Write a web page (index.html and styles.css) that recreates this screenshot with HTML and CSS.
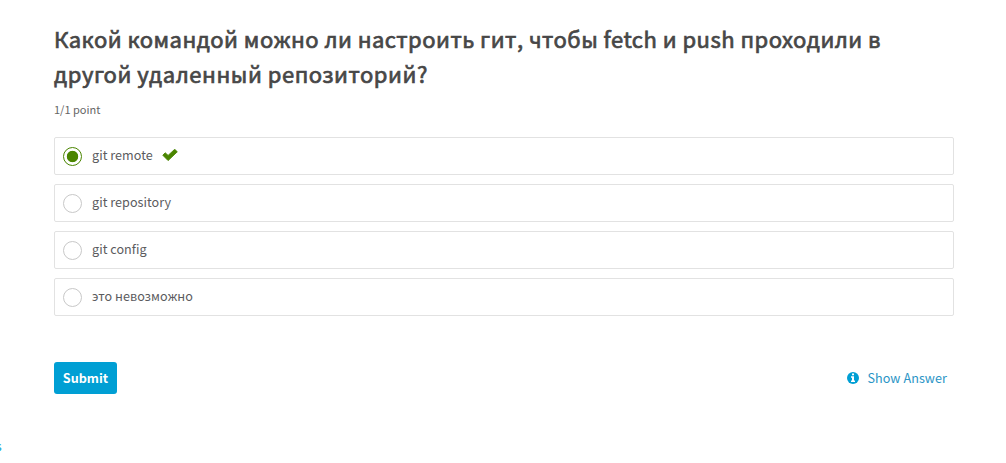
FILE: index.html
```html
<!DOCTYPE html>
<html lang="ru">
<head>
<meta charset="utf-8">
<title>Git</title>
<link rel="stylesheet" href="styles.css">
</head>
<body>
<main class="problem">
  <h3 class="title"><span class="line first">Какой командой можно ли настроить гит, чтобы fetch и push проходили в</span> <span class="line second">другой удаленный репозиторий?</span></h3>
  <div class="progress"><span>1/1 point</span></div>
  <div class="choices">
    <label class="choice"><i class="radio checked"></i><span>git remote</span>
      <svg class="check" width="16" height="12" viewBox="0 0 16 12"><path d="M.8 6.2 3.2 3.8 6.1 6.4 12.7.3 15.3 2.8 6.1 11.6Z" fill="#4a8500" stroke="#4a8500" stroke-width=".9" stroke-linejoin="round"/></svg></label>
    <label class="choice"><i class="radio"></i><span>git repository</span></label>
    <label class="choice"><i class="radio"></i><span>git config</span></label>
    <label class="choice"><i class="radio"></i><span>это невозможно</span></label>
  </div>
  <div class="actions">
    <button class="submit"><span>Submit</span></button>
    <a class="show"><svg width="12" height="12" viewBox="0 0 12 12"><circle cx="6" cy="6" r="6" fill="#009fd4"/><path d="M5 1.5h2v1.7H5zM4 4.3h3v4.2h1V10H4V8.5h1V5.8H4z" fill="#fff"/></svg><span>Show Answer</span></a>
  </div>
</main>
<div class="edge"><span>s</span></div>
</body>
</html>
```
FILE: styles.css
```css
* { box-sizing: border-box; }
body {
  margin: 0;
  height: 463px;
  overflow: hidden;
  background: #fff;
  color: #5b5b5e;
  font-family: "Noto Sans CJK SC", "Noto Sans", sans-serif;
}
.problem { width: 900px; margin-left: 54px; padding-top: 21px; }
.title {
  margin: 0;
  font-size: 22px;
  line-height: 35px;
  font-weight: 400;
  letter-spacing: .475px;
  color: #474747;
  -webkit-text-stroke: .7px #474747;
}
.line { display: block; white-space: nowrap; }
.second { letter-spacing: .54px; }
.progress { margin-top: 8px; height: 20px; font-size: 11px; line-height: 20px; color: #666; }
.choices { display: grid; gap: 9px; margin-top: 18px; }
.choice {
  display: flex;
  align-items: center;
  height: 38px;
  padding-left: 8px;
  border: 1px solid #e2e2e2;
  border-radius: 2px;
  font-size: 12.6px;
  line-height: 20px;
  letter-spacing: .03px;
  white-space: nowrap;
}
.choice span { margin: 0 0 2px 10px; }
.radio { width: 19px; height: 19px; border: 1px solid #c8c8c8; border-radius: 50%; margin-top: 1px; }
.radio.checked {
  border-color: #4a8500;
  background: radial-gradient(circle, #4a8500 5.3px, transparent 6.1px);
}
.check { margin: 0 0 2px 9px; }
.actions { display: flex; justify-content: space-between; margin-top: 46px; height: 32px; }
.submit {
  width: 63px;
  padding: 0;
  border: 0;
  border-radius: 3px;
  background: #009fd4;
  color: #fff;
  font: 700 12.6px/32px "Noto Sans CJK SC", "Noto Sans", sans-serif;
}
.show { display: flex; align-items: center; gap: 8px; padding-right: 7px; color: #2b95c6; font-size: 12.6px; letter-spacing: .07px; }
.show span { margin-bottom: 2px; }
.edge { display: flex; justify-content: flex-end; width: 1.6px; height: 20px; margin-top: 42px; overflow: hidden; font-size: 12.6px; line-height: 20px; color: #009fd4; }
```
